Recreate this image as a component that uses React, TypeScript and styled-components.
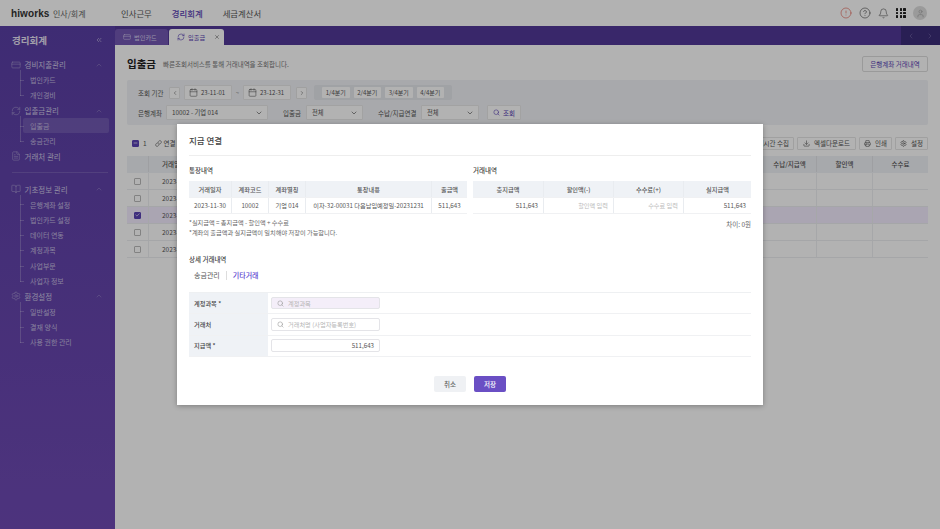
import React from 'react';
import styled, { createGlobalStyle } from 'styled-components';
import {
  Calendar, ChevronLeft, ChevronRight, ChevronDown, ChevronUp, ChevronsLeft, Search, Link, Download, Printer,
  Settings, CreditCard, RefreshCw, X, AlertCircle, HelpCircle, Bell, User, BookOpen, FileText, Check, Minus,
} from 'lucide-react';

const Global = createGlobalStyle`
  html, body { margin: 0; padding: 0; background: #fff; }
  * { box-sizing: border-box; }
  body { font-family: "Noto Sans CJK KR", "Noto Sans", sans-serif; color: #333; }
`;

const Page = styled.div`
  position: relative; width: 940px; height: 529px; overflow: hidden;
  display: flex; flex-direction: column; background: #fff;
`;
const TopBar = styled.header`
  height: 26px; flex: none; display: flex; align-items: center; padding: 0 13px 0 11px;
`;
const Logo = styled.span`font: 700 10px "Liberation Sans", sans-serif; color: #333; letter-spacing: .1px; width: 42px;`;
const Product = styled.span`font-size: 8px; color: #666; width: 68px;`;
const NavItem = styled.span<{ $active?: boolean }>`
  font-size: 8.4px; margin-right: 20px; font-weight: ${p => (p.$active ? 500 : 400)};
  color: ${p => (p.$active ? '#5b43b5' : '#555')};
`;
const TopIcons = styled.div`margin-left: auto; display: flex; align-items: center; gap: 7px;`;
const RoundAvatar = styled.span`
  width: 14px; height: 14px; border-radius: 50%; background: #ddd; color: #aaa;
  display: flex; align-items: center; justify-content: center;
`;
const Dots = styled.span`
  width: 10px; height: 10px; display: grid; grid-template-columns: repeat(3, 2.4px); gap: 1.2px;
  & > i { background: #222; display: block; border-radius: .5px; }
`;
const Body = styled.div`flex: 1; display: flex; min-height: 0;`;
const Side = styled.aside`
  width: 115px; flex: none; background: linear-gradient(#5a3fa5, #6f4ab4); color: #d8d2ea;
`;
const SideTitle = styled.div`
  height: 31px; padding: 0 12px 3px; display: flex; align-items: center; justify-content: space-between;
  font-size: 9.5px; font-weight: 700; color: #e8e4f4;
`;
const GroupRow = styled.div`
  height: 15.3px; padding: 0 12px 0 11px; display: flex; align-items: center; justify-content: space-between;
  font-size: 7.5px; color: #cfc8e6;
`;
const GroupName = styled.span`display: flex; align-items: center; gap: 3.5px; & > svg { opacity: .75; }`;
const GroupCaret = styled(ChevronUp)`opacity: .6;`;
const SubList = styled.div`
  margin-left: 20px; position: relative;
  &::before { content: ''; position: absolute; left: 0; top: -2px; bottom: 7px; width: 1px; background: rgba(255,255,255,.22); }
`;
const SubItem = styled.div<{ $active?: boolean }>`
  height: 15.3px; margin-left: 3px; width: 86px; padding-left: 7px; display: flex; align-items: center;
  font-size: 7px; position: relative; border-radius: 2px; color: #c4bce0;
  background: ${p => (p.$active ? 'rgba(255,255,255,.13)' : 'transparent')};
  &::before { content: ''; position: absolute; left: -3px; top: 7.5px; width: 4px; height: 1px; background: rgba(255,255,255,.22); }
`;
const SideRule = styled.div`height: 1px; margin: 8px 7px 8.5px 12px; background: rgba(255,255,255,.14);`;
const Main = styled.main`flex: 1; display: flex; flex-direction: column; min-width: 0;`;
const TabBar = styled.div`
  height: 19px; flex: none; background: #523999; display: flex; align-items: flex-end; gap: 1px;
`;
const Tab = styled.div<{ $active?: boolean }>`
  height: 16px; width: ${p => (p.$active ? 55 : 53)}px; border-radius: 3px 3px 0 0; display: flex; align-items: center;
  padding-left: 8px; gap: 3px; font-size: 6.2px; flex: none;
  background: ${p => (p.$active ? '#fff' : '#7358b4')}; color: ${p => (p.$active ? '#5b43b5' : '#d8d0ee')};
`;
const TabClose = styled(X)`margin-left: 6px; color: #555;`;
const TabNav = styled.div`
  margin-left: auto; width: 39px; height: 19px; background: #3c2d79; color: #6f63a5;
  display: flex; align-items: center; justify-content: space-around;
`;
const Content = styled.div`flex: 1; padding: 0 12px; display: flex; flex-direction: column;`;
const HeadRow = styled.div`height: 35px; display: flex; align-items: center; padding-top: 2px;`;
const H1 = styled.h1`font-size: 10.5px; font-weight: 700; margin: 0 7px 0 0; color: #222;`;
const HeadSub = styled.span`font-size: 6.5px; color: #777;`;
const OutlineBtn = styled.button`
  margin-left: auto; height: 16px; width: 66px; padding: 0; border: 1px solid #ddd; background: #fff; border-radius: 2px;
  font: 6.5px "Noto Sans CJK KR", sans-serif; color: #5b43b5;
`;
const Filter = styled.section`
  height: 45px; flex: none; background: #f1f3f6; border-radius: 2px; padding: 5px 0 0 11px;
  display: flex; flex-direction: column; gap: 5px;
`;
const FilterRow = styled.div`height: 15px; display: flex; align-items: center;`;
const FLabel = styled.span<{ $w: number; $ml?: number }>`
  width: ${p => p.$w}px; margin-left: ${p => p.$ml ?? 0}px; font-size: 6.5px; color: #555; white-space: nowrap;
`;
const SquareBtn = styled.span<{ $ml?: number }>`
  width: 11px; height: 12px; margin-left: ${p => p.$ml ?? 0}px; background: #fff; border: 1px solid #e5e5e5; border-radius: 1px;
  display: flex; align-items: center; justify-content: center; color: #555;
`;
const DateBox = styled.span<{ $ml?: number }>`
  width: 48px; height: 15px; margin-left: ${p => p.$ml ?? 0}px; background: #fff; border: 1px solid #e8e8e8; border-radius: 1px;
  display: flex; align-items: center; padding-left: 4px; gap: 3px; font-size: 6px; color: #555;
`;
const Tilde = styled.span`width: 11px; text-align: center; font-size: 6px; color: #888;`;
const QGroup = styled.div`
  margin-left: 7px; height: 15px; background: #e6e8ec; border-radius: 2px; padding: 0 8px; display: flex; align-items: center; gap: 4px;
`;
const QBtn = styled.span`
  width: 27.5px; height: 11px; background: #fff; border-radius: 1px; font-size: 6px; color: #555;
  display: flex; align-items: center; justify-content: center;
`;
const Select = styled.div<{ $w: number; $ml?: number }>`
  width: ${p => p.$w}px; height: 15px; margin-left: ${p => p.$ml ?? 0}px; background: #fff; border: 1px solid #e8e8e8; border-radius: 1px;
  display: flex; align-items: center; justify-content: space-between; padding: 0 4px 0 5px; font-size: 6.3px; color: #555;
`;
const SearchBtn = styled.span`
  margin-left: 8px; width: 34px; height: 15px; background: #fff; border: 1px solid #e8e8e8; border-radius: 1px; font-size: 6.5px; color: #5b43b5;
  display: flex; align-items: center; justify-content: center; gap: 3px;
`;
const Toolbar = styled.div`height: 31px; display: flex; align-items: center; gap: 4px; padding: 5px 0 0 5px; flex: none;`;
const Box = styled.span<{ $on?: boolean }>`
  width: 7px; height: 7px; flex: none; border-radius: 1px; display: flex; align-items: center; justify-content: center;
  color: #fff; background: ${p => (p.$on ? '#5b43b5' : '#fff')}; border: 1px solid ${p => (p.$on ? '#5b43b5' : '#bbb')};
`;
const Small = styled.span`font-size: 6.5px; color: #555;`;
const ToolLink = styled.span`display: flex; align-items: center; gap: 2px; font-size: 6.5px; color: #555; margin-left: 4px;`;
const ToolRight = styled.div`margin-left: auto; display: flex; gap: 3px;`;
const ToolBtn = styled.span<{ $w: number; $end?: boolean }>`
  width: ${p => p.$w}px; height: 13px; background: #fff; border: 1px solid #e6e6e6; border-radius: 1px; font-size: 6.5px; color: #555;
  display: flex; align-items: center; gap: 4px;
  justify-content: ${p => (p.$end ? 'flex-end' : 'center')}; padding-right: ${p => (p.$end ? 4 : 0)}px;
`;
const BgRow = styled.div<{ $head?: boolean; $sel?: boolean }>`
  height: 17px; flex: none; display: grid; grid-template-columns: 21px 1fr 53px 56px 56px; align-items: stretch;
  font-size: 6.5px; color: #555;
  background: ${p => (p.$head ? '#f0f2f6' : p.$sel ? '#f4edff' : '#fff')};
  border-bottom: 1px solid ${p => (p.$head ? '#f0f2f6' : '#eceef1')};
`;
const BgCell = styled.span<{ $sep?: boolean; $pad?: boolean; $head?: boolean }>`
  display: flex; align-items: center; justify-content: ${p => (p.$pad ? 'flex-start' : 'center')};
  padding-left: ${p => (p.$pad ? 13 : 0)}px; font-weight: ${p => (p.$head ? 500 : 400)};
  border-left: ${p => (p.$sep ? `1px solid ${p.$head ? '#e2e4e8' : '#eef0f3'}` : 'none')};
`;

const Overlay = styled.div`
  position: absolute; inset: 0; background: rgba(0,0,0,.3); display: flex; align-items: center; justify-content: center;
`;
const Modal = styled.div`
  width: 586px; height: 281px; background: #fff; box-shadow: 0 1px 5px rgba(0,0,0,.3); padding: 0 12px;
  display: flex; flex-direction: column;
`;
const MTitle = styled.div`
  height: 32px; flex: none; border-bottom: 1px solid #eee; display: flex; align-items: center; padding-top: 1px;
  font-size: 8.5px; font-weight: 500; color: #444;
`;
const TwoCols = styled.div`display: flex; gap: 6px; margin-top: 7px;`;
const Col = styled.div`width: 278px;`;
const SecLabel = styled.div`height: 14px; margin-bottom: 4px; display: flex; align-items: center; font-size: 6.5px; font-weight: 500; color: #444;`;
const GridRow = styled.div<{ $cols: string; $head?: boolean }>`
  display: grid; grid-template-columns: ${p => p.$cols}; height: ${p => (p.$head ? 17 : 16)}px;
  background: ${p => (p.$head ? '#eff2f6' : '#fff')}; border-bottom: 1px solid #f0f1f3;
  font-size: 6.2px; color: #555; font-weight: ${p => (p.$head ? 500 : 400)};
`;
const GCell = styled.span<{ $align?: string; $muted?: boolean }>`
  display: flex; align-items: center; white-space: nowrap; padding: 0 5px;
  justify-content: ${p => p.$align ?? 'center'}; color: ${p => (p.$muted ? '#bbb' : 'inherit')};
  border-left: 1px solid #e9ecf0; &:first-child { border-left: none; }
`;
const NotesRow = styled.div`display: flex; justify-content: space-between; margin-top: 4px;`;
const Notes = styled.div`font-size: 6.2px; line-height: 10px; color: #666;`;
const Diff = styled.div`font-size: 6.5px; color: #666; line-height: 10px; padding-top: 1px;`;
const DetailLabel = styled(SecLabel)`margin: 14px 0 0;`;
const InnerTabs = styled.div`display: flex; align-items: center; height: 18px; padding-left: 5px; font-size: 7px;`;
const InnerTab = styled.span<{ $on?: boolean }>`
  color: ${p => (p.$on ? '#5b43d0' : '#555')}; font-weight: ${p => (p.$on ? 500 : 400)};
`;
const InnerSep = styled.span`width: 1px; height: 9px; background: #ddd; margin: 0 6px;`;
const Form = styled.div`margin-top: 8px; border-top: 1px solid #eef0f2;`;
const FormRow = styled.div`
  display: grid; grid-template-columns: 79px 1fr; height: 21.3px; border-bottom: 1px solid #f0f1f3;
`;
const FormLabel = styled.div`background: #eff2f6; display: flex; align-items: center; padding-left: 5px; font-size: 6.2px; font-weight: 500; color: #444;`;
const FormField = styled.div`display: flex; align-items: center; padding-left: 3px;`;
const Field = styled.div<{ $pink?: boolean; $right?: boolean }>`
  width: 109px; height: 12.5px; border: 1px solid #e4e4e8; border-radius: 2px; display: flex; align-items: center; gap: 4px;
  padding: 0 5px; font-size: 6.2px; color: ${p => (p.$right ? '#555' : '#b5b5b5')};
  justify-content: ${p => (p.$right ? 'flex-end' : 'flex-start')};
  background: ${p => (p.$pink ? '#f4eef9' : '#fff')};
`;
const FieldIcon = styled(Search)`color: #999; flex: none;`;
const Actions = styled.div`display: flex; justify-content: center; gap: 8px; margin-top: 19px;`;
const ActionBtn = styled.button<{ $primary?: boolean }>`
  width: 32px; height: 16px; padding: 0; border: none; border-radius: 2px; font: 500 6.5px "Noto Sans CJK KR", sans-serif;
  background: ${p => (p.$primary ? '#6a4fc4' : '#eff1f4')}; color: ${p => (p.$primary ? '#fff' : '#666')};
`;

const Group: React.FC<{ icon: React.ElementType; label: string; open?: boolean }> = ({ icon: I, label, open = true }) => (
  <GroupRow>
    <GroupName><I size={10} strokeWidth={1.2} />{label}</GroupName>
    {open ? <GroupCaret size={8} strokeWidth={1.4} /> : null}
  </GroupRow>
);

const leftCols = '42px 37px 37px 126px 36px';
const rightCols = '70px 70px 70px 68px';

export default function App() {
  const rows = [false, false, true, false, false];
  return (
    <Page>
      <Global />
      <TopBar>
        <Logo>hiworks</Logo>
        <Product>인사/회계</Product>
        <NavItem>인사근무</NavItem>
        <NavItem $active>경리회계</NavItem>
        <NavItem>세금계산서</NavItem>
        <TopIcons>
          <AlertCircle size={12} color="#e0594c" strokeWidth={1.2} />
          <HelpCircle size={12} color="#444" strokeWidth={1.2} />
          <Bell size={11} color="#444" strokeWidth={1.2} />
          <Dots>{Array.from({ length: 9 }, (_, i) => <i key={i} />)}</Dots>
          <RoundAvatar><User size={9} strokeWidth={2} /></RoundAvatar>
        </TopIcons>
      </TopBar>
      <Body>
        <Side>
          <SideTitle>경리회계<ChevronsLeft size={8} strokeWidth={1.4} /></SideTitle>
          <Group icon={CreditCard} label="경비지출관리" />
          <SubList>
            <SubItem>법인카드</SubItem>
            <SubItem>개인경비</SubItem>
          </SubList>
          <Group icon={RefreshCw} label="입출금관리" />
          <SubList>
            <SubItem $active>입출금</SubItem>
            <SubItem>송금관리</SubItem>
          </SubList>
          <Group icon={FileText} label="거래처 관리" open={false} />
          <SideRule />
          <Group icon={BookOpen} label="기초정보 관리" />
          <SubList>
            <SubItem>은행계좌 설정</SubItem>
            <SubItem>법인카드 설정</SubItem>
            <SubItem>데이터 연동</SubItem>
            <SubItem>계정과목</SubItem>
            <SubItem>사업부문</SubItem>
            <SubItem>사업자 정보</SubItem>
          </SubList>
          <Group icon={Settings} label="환경설정" />
          <SubList>
            <SubItem>일반설정</SubItem>
            <SubItem>결재 양식</SubItem>
            <SubItem>사용 권한 관리</SubItem>
          </SubList>
        </Side>
        <Main>
          <TabBar>
            <Tab><CreditCard size={8} strokeWidth={1.5} />법인카드</Tab>
            <Tab $active><RefreshCw size={8} strokeWidth={1.8} />입출금<TabClose size={6} /></Tab>
            <TabNav><ChevronLeft size={8} /><ChevronRight size={8} /></TabNav>
          </TabBar>
          <Content>
            <HeadRow>
              <H1>입출금</H1>
              <HeadSub>빠른조회서비스를 통해 거래내역을 조회합니다.</HeadSub>
              <OutlineBtn>은행계좌 거래내역</OutlineBtn>
            </HeadRow>
            <Filter>
              <FilterRow>
                <FLabel $w={31}>조회 기간</FLabel>
                <SquareBtn><ChevronLeft size={6} /></SquareBtn>
                <DateBox $ml={4}><Calendar size={9} strokeWidth={1.5} />23-11-01</DateBox>
                <Tilde>~</Tilde>
                <DateBox><Calendar size={9} strokeWidth={1.5} />23-12-31</DateBox>
                <SquareBtn $ml={5}><ChevronRight size={6} /></SquareBtn>
                <QGroup>
                  <QBtn>1/4분기</QBtn><QBtn>2/4분기</QBtn><QBtn>3/4분기</QBtn><QBtn>4/4분기</QBtn>
                </QGroup>
              </FilterRow>
              <FilterRow>
                <FLabel $w={28}>은행계좌</FLabel>
                <Select $w={102}>10002 - 기업 014<ChevronDown size={8} /></Select>
                <FLabel $w={23} $ml={15}>입출금</FLabel>
                <Select $w={57}>전체<ChevronDown size={8} /></Select>
                <FLabel $w={43} $ml={15}>수납/지급연결</FLabel>
                <Select $w={58}>전체<ChevronDown size={8} /></Select>
                <SearchBtn><Search size={7} />조회</SearchBtn>
              </FilterRow>
            </Filter>
            <Toolbar>
              <Box $on><Minus size={6} strokeWidth={3} /></Box>
              <Small>1</Small>
              <ToolLink><Link size={7} />연결</ToolLink>
              <ToolRight>
                <ToolBtn $w={60} $end>실시간 수집</ToolBtn>
                <ToolBtn $w={59}><Download size={7} />엑셀다운로드</ToolBtn>
                <ToolBtn $w={33}><Printer size={7} />인쇄</ToolBtn>
                <ToolBtn $w={33}><Settings size={7} />설정</ToolBtn>
              </ToolRight>
            </Toolbar>
            <BgRow $head>
              <BgCell />
              <BgCell $sep $pad $head>거래일</BgCell>
              <BgCell $head>수납/지급액</BgCell>
              <BgCell $sep $head>할인액</BgCell>
              <BgCell $sep $head>수수료</BgCell>
            </BgRow>
            {rows.map((sel, i) => (
              <BgRow key={i} $sel={sel}>
                <BgCell><Box $on={sel}>{sel ? <Check size={6} strokeWidth={3} /> : null}</Box></BgCell>
                <BgCell $sep $pad>2023-</BgCell>
                <BgCell />
                <BgCell $sep />
                <BgCell $sep />
              </BgRow>
            ))}
          </Content>
        </Main>
      </Body>
      <Overlay>
        <Modal>
          <MTitle>지급 연결</MTitle>
          <TwoCols>
            <Col>
              <SecLabel>통장내역</SecLabel>
              <GridRow $cols={leftCols} $head>
                <GCell>거래일자</GCell><GCell>계좌코드</GCell><GCell>계좌별칭</GCell><GCell>통장내용</GCell><GCell>출금액</GCell>
              </GridRow>
              <GridRow $cols={leftCols}>
                <GCell>2023-11-30</GCell><GCell>10002</GCell><GCell>기업 014</GCell>
                <GCell>이자-32-00031 다음납입예정일-20231231</GCell><GCell>511,643</GCell>
              </GridRow>
            </Col>
            <Col>
              <SecLabel>거래내역</SecLabel>
              <GridRow $cols={rightCols} $head>
                <GCell>총지급액</GCell><GCell>할인액(-)</GCell><GCell>수수료(+)</GCell><GCell>실지급액</GCell>
              </GridRow>
              <GridRow $cols={rightCols}>
                <GCell $align="flex-end">511,643</GCell>
                <GCell $align="flex-end" $muted>할인액 입력</GCell>
                <GCell $align="flex-end" $muted>수수료 입력</GCell>
                <GCell $align="flex-end">511,643</GCell>
              </GridRow>
            </Col>
          </TwoCols>
          <NotesRow>
            <Notes>
              *실지급액 = 총지급액 - 할인액 + 수수료<br />
              *계좌의 출금액과 실지급액이 일치해야 저장이 가능합니다.
            </Notes>
            <Diff>차이: 0원</Diff>
          </NotesRow>
          <DetailLabel>상세 거래내역</DetailLabel>
          <InnerTabs>
            <InnerTab>송금관리</InnerTab>
            <InnerSep />
            <InnerTab $on>기타거래</InnerTab>
          </InnerTabs>
          <Form>
            <FormRow>
              <FormLabel>계정과목 *</FormLabel>
              <FormField><Field $pink><FieldIcon size={7} />계정과목</Field></FormField>
            </FormRow>
            <FormRow>
              <FormLabel>거래처</FormLabel>
              <FormField><Field><FieldIcon size={7} />거래처명 (사업자등록번호)</Field></FormField>
            </FormRow>
            <FormRow>
              <FormLabel>지급액 *</FormLabel>
              <FormField><Field $right>511,643</Field></FormField>
            </FormRow>
          </Form>
          <Actions>
            <ActionBtn>취소</ActionBtn>
            <ActionBtn $primary>저장</ActionBtn>
          </Actions>
        </Modal>
      </Overlay>
    </Page>
  );
}
